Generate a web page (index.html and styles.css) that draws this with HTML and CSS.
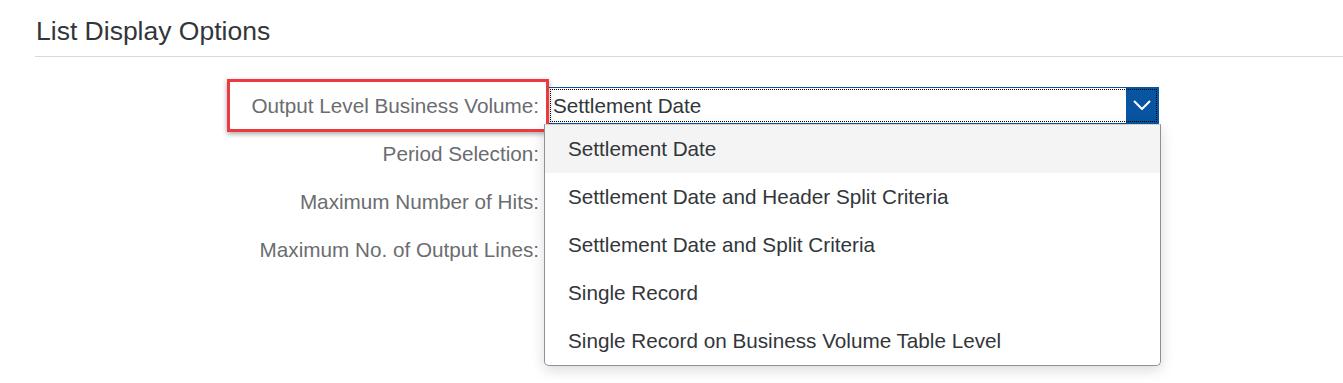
FILE: index.html
```html
<!DOCTYPE html>
<html lang="en">
<head>
    <meta charset="UTF-8">
    <meta name="viewport" content="width=device-width, initial-scale=1.0">
    <title>List Display Options</title>
    <link rel="stylesheet" href="styles.css">
</head>
<body>
    <div class="page">
        <h1 class="section-title">List Display Options</h1>

        <div class="form-grid">
            <div class="label-cell">
                <label class="field-label highlighted" for="outputLevel">Output Level Business Volume:</label>
            </div>
            <div class="field-cell">
                <div class="select-box">
                    <div class="select-value" id="outputLevel">Settlement Date</div>
                    <div class="value-help">
                        <svg width="18" height="10" viewBox="0 0 18 10">
                            <path d="M1 1 L9 9 L17 1" fill="none" stroke="#fff" stroke-width="2"/>
                        </svg>
                    </div>
                    <div class="focus-ring"></div>
                </div>

                <ul class="dropdown">
                    <li class="dropdown-item active">Settlement Date</li>
                    <li class="dropdown-item">Settlement Date and Header Split Criteria</li>
                    <li class="dropdown-item">Settlement Date and Split Criteria</li>
                    <li class="dropdown-item">Single Record</li>
                    <li class="dropdown-item">Single Record on Business Volume Table Level</li>
                </ul>
            </div>

            <div class="label-cell">
                <label class="field-label">Period Selection:</label>
            </div>
            <div class="field-cell"></div>

            <div class="label-cell">
                <label class="field-label">Maximum Number of Hits:</label>
            </div>
            <div class="field-cell"></div>

            <div class="label-cell">
                <label class="field-label">Maximum No. of Output Lines:</label>
            </div>
            <div class="field-cell"></div>
        </div>
    </div>
</body>
</html>
```

FILE: styles.css
```css
* {
    margin: 0;
    padding: 0;
    box-sizing: border-box;
}

html, body {
    height: 100%;
}

body {
    background: #fff;
    font-family: 'Liberation Sans', Arial, sans-serif;
    color: #32363a;
}

.page {
    min-height: 100%;
    padding: 13px 0 0 0;
}

.section-title {
    margin-left: 35px;
    padding-left: 1px;
    font-size: 26.5px;
    font-weight: normal;
    line-height: 36px;
    height: 44px;
    color: #32363a;
    border-bottom: 1px solid #d9d9d9;
}

.form-grid {
    display: grid;
    grid-template-columns: 548px 611px;
    grid-auto-rows: 48px;
    margin-top: 24px;
}

.label-cell {
    display: flex;
    justify-content: flex-end;
    align-items: center;
    position: relative;
    z-index: 2;
}

.field-label {
    display: block;
    font-size: 20.7px;
    color: #6a6d70;
    line-height: 24px;
    padding: 12px 7px 11px 22px;
    margin-right: -1px;
    border: 3px solid transparent;
}

.field-label.highlighted {
    border-color: #ec3a40;
    box-shadow: 0 2px 5px rgba(0,0,0,0.35);
}

.field-cell {
    display: flex;
    align-items: center;
    position: relative;
}

.select-box {
    position: relative;
    display: flex;
    width: 611px;
    height: 37px;
    border: 1px solid #0854a0;
    background: #fff;
}

.select-value {
    flex: 1;
    padding-left: 4px;
    font-size: 20.7px;
    line-height: 35px;
    color: #32363a;
}

.value-help {
    width: 32px;
    background: #0854a0;
    display: flex;
    align-items: center;
    justify-content: center;
}

.focus-ring {
    position: absolute;
    top: 1px;
    left: 1px;
    right: 1px;
    bottom: 1px;
    border: 1px dotted #000;
    pointer-events: none;
}

.dropdown {
    position: absolute;
    top: 43px;
    left: -4px;
    width: 617px;
    list-style: none;
    background: #fff;
    border: 1px solid #89919a;
    border-top-color: #d0d0d0;
    border-radius: 0 0 5px 5px;
    box-shadow: 0 4px 14px rgba(0,0,0,0.15);
    z-index: 3;
}

.dropdown-item {
    height: 48px;
    line-height: 48px;
    padding-left: 23px;
    font-size: 20.7px;
    color: #32363a;
}

.dropdown-item.active {
    background: #f4f4f4;
}
```
